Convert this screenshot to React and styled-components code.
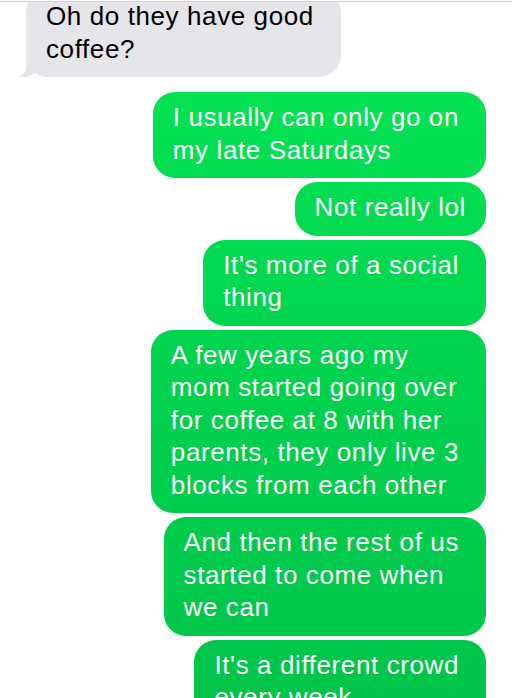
import React from "react";
import styled, { createGlobalStyle } from "styled-components";

const GlobalStyle = createGlobalStyle`
    html, body {
        margin: 0;
        padding: 0;
        background: #ffffff;
        overflow: hidden;
    }
`;

const Screen = styled.div`
    display: flex;
    flex-direction: column;
    width: 512px;
    height: 698px;
    overflow: hidden;
    background: #ffffff;
    font-family: "Liberation Sans", Arial, sans-serif;
`;

const TopRule = styled.div`
    height: 1px;
    margin-top: 1px;
    background: #d2d2d6;
    flex-shrink: 0;
`;

const Thread = styled.div`
    flex: 1;
    overflow: hidden;
`;

const MessageList = styled.div`
    display: flex;
    flex-direction: column;
    padding: 0 26px;
    margin-top: -11px;
`;

const Bubble = styled.div`
    position: relative;
    align-self: ${props => (props.$mine ? "flex-end" : "flex-start")};
    margin-top: ${props => (props.$newSender ? "15px" : "4px")};
    padding: 9px ${props => (props.$wrapped ? "27px" : "20px")} 12px 20px;
    border-radius: 22px;
    font-size: 26px;
    line-height: 32.5px;
    letter-spacing: 0.6px;
    white-space: pre-line;
    color: ${props => (props.$mine ? "#ffffff" : "#000000")};
    background: ${props =>
        props.$mine
            ? "linear-gradient(180deg, #06e755 0%, #00d44e 50%, #00c44a 100%) fixed"
            : "#e5e5ea"};

    &:first-child {
        margin-top: 0;
    }

    ${props =>
        props.$tail &&
        `
        &::before {
            content: "";
            position: absolute;
            bottom: 0;
            left: -8px;
            width: 22px;
            height: 22px;
            background: #e5e5ea;
            border-bottom-right-radius: 16px;
        }
        &::after {
            content: "";
            position: absolute;
            bottom: 0;
            left: -10px;
            width: 10px;
            height: 22px;
            background: #ffffff;
            border-bottom-right-radius: 10px;
        }
    `}
`;

const BubbleText = styled.span`
    position: relative;
    z-index: 1;
`;

const messages = [
    { mine: false, tail: true, text: "Oh do they have good\ncoffee?" },
    { mine: true, text: "I usually can only go on\nmy late Saturdays" },
    { mine: true, text: "Not really lol" },
    { mine: true, text: "It's more of a social\nthing" },
    {
        mine: true,
        text: "A few years ago my\nmom started going over\nfor coffee at 8 with her\nparents, they only live 3\nblocks from each other",
    },
    { mine: true, text: "And then the rest of us\nstarted to come when\nwe can" },
    { mine: true, text: "It's a different crowd\nevery week" },
];

const App = () => {
    return (
        <Screen>
            <GlobalStyle />
            <TopRule />
            <Thread>
                <MessageList>
                    {messages.map((m, i) => (
                        <Bubble
                            key={i}
                            $mine={m.mine}
                            $tail={m.tail}
                            $wrapped={m.text.includes("\n")}
                            $newSender={i > 0 && messages[i - 1].mine !== m.mine}
                        >
                            <BubbleText>{m.text}</BubbleText>
                        </Bubble>
                    ))}
                </MessageList>
            </Thread>
        </Screen>
    );
};

export default App;
